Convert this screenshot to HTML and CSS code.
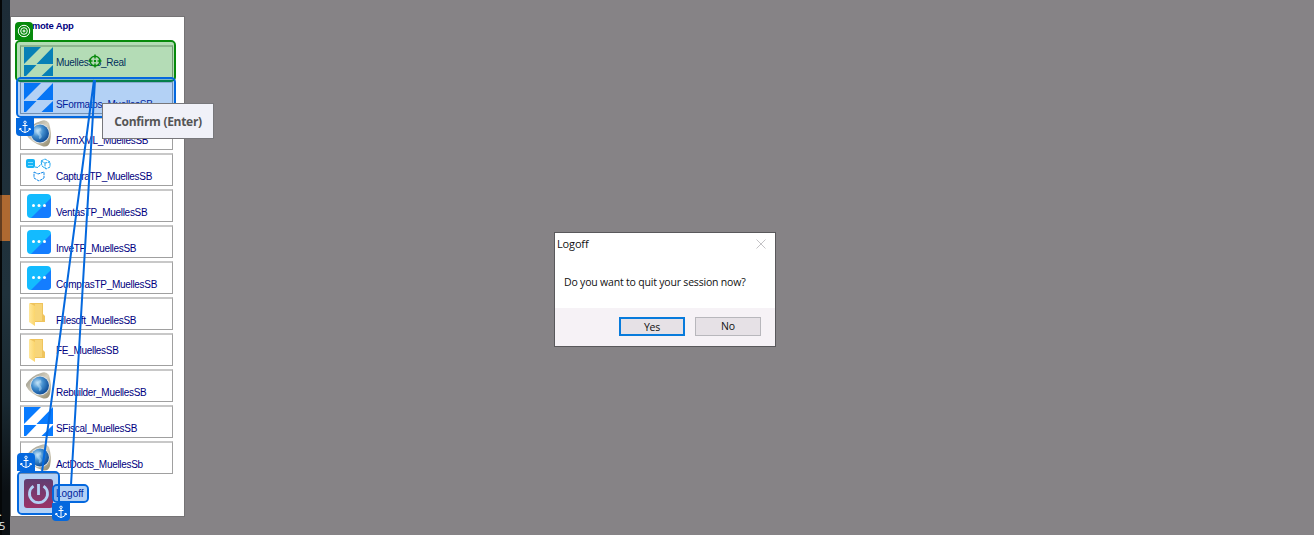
FILE: index.html
```html
<!DOCTYPE html>
<html lang="en">
<head>
<meta charset="utf-8">
<title>Remote App</title>
<link rel="stylesheet" href="styles.css">
</head>
<body>
<svg class="defs" width="0" height="0">
  <defs>
    <linearGradient id="gold" x1="0" y1="0" x2="1" y2="1"><stop offset="0" stop-color="#88877a"/><stop offset=".5" stop-color="#d5d0c0"/><stop offset="1" stop-color="#8f8668"/></linearGradient>
    <radialGradient id="ball" cx=".35" cy=".35" r=".7"><stop offset="0" stop-color="#c4e2f6"/><stop offset=".45" stop-color="#4490d0"/><stop offset="1" stop-color="#0c4a94"/></radialGradient>
    <linearGradient id="fold" x1="0" y1="0" x2="1" y2="0"><stop offset="0" stop-color="#ffe79a"/><stop offset="1" stop-color="#fbd56c"/></linearGradient>
    <linearGradient id="pow" x1="0" y1="0" x2="0" y2="1"><stop offset="0" stop-color="#882c43"/><stop offset="1" stop-color="#dd1e35"/></linearGradient>
    <symbol id="i-s" viewBox="0 0 29 29"><path fill="#087bff" d="M0 0H17L0 17zM29 0V17H12.500zM0 18H12.500L2 29H0zM29 18V29H17.500z"/></symbol>
    <symbol id="i-orb" viewBox="0 0 29 29"><path fill="url(#gold)" d="M2 13Q7 5 17 2Q22 0 25 4Q28 14 26 23Q24 29 18 27Q6 23 2 15z"/><circle cx="16" cy="14.500" r="9.800" fill="#dfe3e6"/><circle cx="16" cy="14.500" r="9" fill="url(#ball)"/><path d="M17 10Q12 12 15 15T15 19" fill="none" stroke="#bfe4fa" stroke-width="2.500" opacity=".45"/></symbol>
    <symbol id="i-dots" viewBox="0 0 29 29"><rect x="3" y="3" width="24" height="24" rx="4" fill="#13bbff"/><path fill="#147dff" d="M27 7V23Q27 27 23 27H7z"/><g fill="#fff"><circle cx="9.500" cy="14.500" r="1.500"/><circle cx="15" cy="14.500" r="1.500"/><circle cx="20.500" cy="14.500" r="1.500"/></g></symbol>
    <symbol id="i-cap" viewBox="0 0 29 29"><rect x="2" y="4" width="9" height="9" rx="2" fill="#16b4f5"/><path d="M4 7.500H9M4 10.500H9" stroke="#8bdcfc"/><g fill="none" stroke="#1aa4f0" stroke-dasharray="3 .7"><path d="M11 12L14 12.500L17 9M17 6L21 4L26 7V12L22 14L18 11zM17 6L21 8L26 7M21 8V13"/><path stroke="#168ae8" d="M10 17L14 19L20 17V23L15 26L10 23z"/></g></symbol>
    <symbol id="i-fold" viewBox="0 0 29 29"><path fill="#efc45d" d="M6 4H19V15L21 17V23H7z"/><path fill="url(#fold)" d="M5 4L11 7V27L5 23z"/><path fill="#f7d579" d="M11 5H18V22H11z"/></symbol>
    <symbol id="i-anchor" viewBox="0 0 14 14"><g fill="none" stroke="#fff"><circle cx="7" cy="2.300" r="1.200"/><path d="M7 3.500V12.500M4.500 5.500H9.500M2 8.500Q3 12 7 12.500Q11 12 12 8.500M1.500 10L2 8.300L3.700 9M12.500 10L12 8.300L10.300 9"/></g></symbol>
  </defs>
</svg>
<div class="desktop">
  <aside class="wallpaper"><div class="accent"></div><span class="clock"><b>.</b><b>5</b></span></aside>
  <main class="panel">
    <h1>Remote App</h1>
    <ul class="apps">
      <li class="mid"><svg><use href="#i-s"/></svg><span>MuellesSB_Real</span></li>
      <li><svg><use href="#i-s"/></svg><span>SFormatos_MuellesSB</span></li>
      <li><svg><use href="#i-orb"/></svg><span>FormXML_MuellesSB</span></li>
      <li><svg><use href="#i-cap"/></svg><span>CapturaTP_MuellesSB</span></li>
      <li><svg><use href="#i-dots"/></svg><span>VentasTP_MuellesSB</span></li>
      <li><svg><use href="#i-dots"/></svg><span>InveTP_MuellesSB</span></li>
      <li><svg><use href="#i-dots"/></svg><span>ComprasTP_MuellesSB</span></li>
      <li><svg><use href="#i-fold"/></svg><span>Filesoft_MuellesSB</span></li>
      <li class="mid"><svg><use href="#i-fold"/></svg><span>FE_MuellesSB</span></li>
      <li><svg><use href="#i-orb"/></svg><span>Rebuilder_MuellesSB</span></li>
      <li><svg><use href="#i-s"/></svg><span>SFiscal_MuellesSB</span></li>
      <li><svg><use href="#i-orb"/></svg><span>ActDocts_MuellesSb</span></li>
    </ul>
    <div class="logoff"><svg viewBox="0 0 29 29"><rect width="29" height="29" rx="3" fill="url(#pow)"/><path d="M9.500 7.200A9 9 0 1 0 19.500 7.200M14.500 5V16" fill="none" stroke="#fff" stroke-width="2.800"/></svg><span>Logoff</span></div>
  </main>
</div>

<div class="mark target"></div>
<div class="mark anchor a1"></div>
<div class="mark anchor a2"></div>
<div class="mark anchor a3"></div>
<svg class="links" viewBox="0 0 220 535">
  <path d="M94 80L42 472M95 80L71 485" fill="none" stroke="#0468de" stroke-width="2"/>
  <circle cx="95" cy="61" r="5" fill="#b4dab5"/>
  <g fill="none" stroke="#078a0c" stroke-width="1.500"><circle cx="95" cy="61" r="4.800"/><path d="M95 54.500V58.500M95 63.500V67.500M88.500 61H92.500M97.500 61H101.500"/></g><circle cx="95" cy="61" r="1.200" fill="#078a0c"/>
</svg>
<div class="tag t0"><svg viewBox="0 0 14 14"><g fill="none" stroke="#fff"><circle cx="7" cy="7" r="5.700"/><circle cx="7" cy="7" r="3.300"/><circle cx="7" cy="7" r="1"/></g></svg></div>
<div class="tag t1"><svg><use href="#i-anchor"/></svg></div>
<div class="tag t2"><svg><use href="#i-anchor"/></svg></div>
<div class="tag t3"><svg><use href="#i-anchor"/></svg></div>
<div class="tip">Confirm (Enter)</div>

<section class="dialog">
  <header><span>Logoff</span><svg viewBox="0 0 10 10"><path d="M.5.5L9.500 9.500M9.500.5L.5 9.500" stroke="#c4c3c6" fill="none"/></svg></header>
  <p><span>Do you want to quit your session now?</span></p>
  <footer><button class="yes">Yes</button><button>No</button></footer>
</section>
</body>
</html>
```
FILE: styles.css
```css
* { box-sizing: border-box; }
body { margin: 0; height: 535px; overflow: hidden; background: #868386; font-family: "Liberation Sans", Arial, sans-serif; }
.defs { position: absolute; }
.desktop { display: flex; height: 535px; }
.wallpaper { width: 10px; border-left: 2px solid #050708; background: linear-gradient(#1d2c37, #20323c 55%, #1a2931 75%, #0b1014 92%); padding-top: 195px; display: flex; flex-direction: column; justify-content: space-between; }
.accent { width: 10px; height: 46px; margin-left: -2px; border-left: 2px solid #633d20; background: #ae6931; }
.clock { color: #eee; font: 11px/14px "Open Sans", sans-serif; margin-left: -3px; padding-bottom: 2px; }
.clock b { display: block; font-weight: 400; }
.panel { width: 174.5px; height: 501px; margin: 16px 0 0; border: 1px solid #757375; background: #fff; padding: 2px 10.5px 0 9px; color: #000080; }
h1 { margin: 0; height: 26px; font-size: 9.5px; line-height: 13px; letter-spacing: -.2px; }
.apps { list-style: none; margin: 0; padding: 0; display: flex; flex-direction: column; gap: 3px; }
.apps li { height: 33px; border: 1px solid #a0a0a0; border-top-width: 2px; border-top-color: #c8c8c8; display: flex; padding-left: 3px; }
.apps svg { width: 29px; height: 29px; flex: none; }
.apps span, .logoff span { font-size: 10px; line-height: 12px; margin-left: 3px; white-space: nowrap; }
.apps span { margin-top: 16px; letter-spacing: -.3px; }
.apps .mid span { margin-top: 10px; }
.logoff { display: flex; align-items: center; padding: 5px 0 0 4px; }
.logoff svg { width: 29px; height: 29px; }
.mark, .links, .tag, .tip, .dialog { position: absolute; }
.mark { border: 2px solid #0468de; border-radius: 5px; background: rgba(4, 104, 222, .3); background-clip: padding-box; }
.target { left: 15px; top: 40px; width: 161px; height: 42px; border-color: #078a0c; background-color: rgba(7, 138, 12, .3); }
.a1 { left: 16px; top: 77px; width: 160px; height: 41px; }
.a2 { left: 17px; top: 471px; width: 43px; height: 44px; }
.a3 { left: 52px; top: 484px; width: 37px; height: 19px; }
.links { left: 0; top: 0; width: 220px; height: 535px; }
.tag { width: 18px; height: 18px; padding: 2px; background: #0468de; border-radius: 3px; }
.tag svg { display: block; width: 14px; height: 14px; }
.t0 { left: 15px; top: 22px; background: #078a0c; border-radius: 4px 4px 0 0; }
.t1 { left: 16px; top: 118px; border-radius: 0 0 4px 4px; }
.t2 { left: 17px; top: 453px; border-radius: 4px 4px 0 0; }
.t3 { left: 52px; top: 503px; border-radius: 0 0 4px 4px; }
.tip { left: 102px; top: 103px; width: 112px; height: 36px; border: 1px solid #77777b; background: #f0f1f8; color: #555; font: 700 12px/35px "Open Sans", sans-serif; letter-spacing: -.3px; text-align: center; white-space: nowrap; }
.dialog { left: 554px; top: 232px; width: 222px; height: 115px; border: 1px solid #59585b; background: #fff; color: #111; font: 11px/16px "Open Sans", sans-serif; letter-spacing: -.15px; display: flex; flex-direction: column; }
.dialog header { display: flex; justify-content: space-between; padding: 3px 9px 0 2px; height: 24px; }
.dialog header svg { width: 10px; height: 10px; margin-top: 3px; }
.dialog p { margin: 0; padding: 17px 0 0 9px; flex: 1; white-space: nowrap; font-size: 10.5px; letter-spacing: -.19px; }
.dialog footer { height: 38px; background: #f6f2f6; display: flex; justify-content: flex-end; gap: 10px; padding: 9px 14px 0 0; }
button { width: 66px; height: 19px; padding: 0; border: 1px solid #b8b7bc; background: #e6e1e6; color: #111; font: 10.5px/17px "Open Sans", sans-serif; letter-spacing: -.2px; }
.yes { border: 2px solid #087bdc; line-height: 16px; }
```
